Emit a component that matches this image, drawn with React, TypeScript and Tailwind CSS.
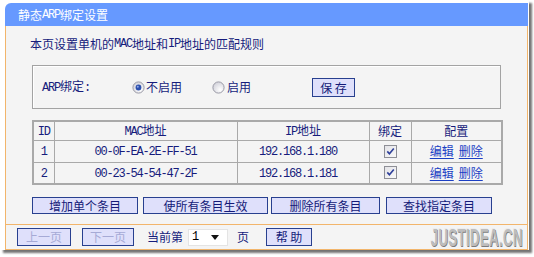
import type { ReactNode } from "react";

const M = ({ children }: { children: ReactNode }) => (
  <span className="font-['Liberation_Mono',monospace] tracking-[-1.2px]">{children}</span>
);

const Radio = ({ on }: { on?: boolean }) => (
  <svg width="13" height="13" viewBox="0 0 13 13" className="shrink-0">
    <defs>
      <radialGradient id={on ? "rg1" : "rg2"} cx="0.65" cy="0.7" r="0.7">
        <stop offset="0" stopColor="#ffffff" />
        <stop offset="1" stopColor="#d4d4dc" />
      </radialGradient>
    </defs>
    <circle cx="6.5" cy="6.5" r="5.6" fill={`url(#${on ? "rg1" : "rg2"})`} stroke="#9a9aa6" strokeWidth="1" />
    {on && <circle cx="6.5" cy="6.5" r="2.9" fill="#2b4fae" />}
    {on && <circle cx="5.8" cy="5.7" r="1" fill="#8fa6e6" />}
  </svg>
);

const Check = () => (
  <svg width="13" height="13" viewBox="0 0 13 13" className="mx-auto block">
    <defs>
      <linearGradient id="cg" x1="0" y1="0" x2="1" y2="1">
        <stop offset="0" stopColor="#e2e2e6" />
        <stop offset="1" stopColor="#fafafa" />
      </linearGradient>
    </defs>
    <rect x="0.5" y="0.5" width="12" height="12" fill="url(#cg)" stroke="#8e8f96" />
    <path d="M3.3 6.4 L5.4 8.8 L9.8 3.4" fill="none" stroke="#2e3f9a" strokeWidth="1.6" />
  </svg>
);

const Btn = ({ children, w, dim }: { children: ReactNode; w: string; dim?: boolean }) => (
  <div
    className={`${w} h-full flex items-center justify-center border border-[#28408f] bg-[#dfe0fb] ${
      dim ? "text-[#a6aad6]" : "text-[#141a78]"
    }`}
  >
    {children}
  </div>
);

const rows = [
  { id: "1", mac: "00-0F-EA-2E-FF-51", ip: "192.168.1.180" },
  { id: "2", mac: "00-23-54-54-47-2F", ip: "192.168.1.181" },
];

export default function App() {
  return (
    <div className="w-[534px] h-[257px] bg-white font-['Noto_Sans_CJK_SC',sans-serif] text-[12px] leading-none text-[#161c7c]">
      <div className="w-[529px] h-[250px] bg-white pl-[5px] pt-[3px] shadow-[3px_3px_2px_rgba(0,0,0,0.55)]">
        <div className="w-[523px] flex flex-col">
          {/* header */}
          <div className="h-[23px] rounded-tl-[6px] bg-[#6699ff] text-white flex items-center pl-[13px]">
            静态<M>ARP</M>绑定设置
          </div>

          {/* body */}
          <div className="h-[224px] bg-[#f4f4f4] border-x border-b border-[#f2b56b] flex flex-col">
            <div className="mt-[10px] h-[16px] flex items-center pl-[24px]">
              本页设置单机的<M>MAC</M>地址和<M>IP</M>地址的匹配规则
            </div>

            {/* fieldset */}
            <div className="mt-[13px] ml-[26px] w-[469px] h-[44px] border border-[#a3a3a3] shadow-[inset_1px_1px_0_#ffffff] flex items-center pl-[9px]">
              <span className="w-[90px]">
                <M>ARP</M>绑定<M>:</M>
              </span>
              <Radio on />
              <span className="ml-[1px]">不启用</span>
              <span className="ml-[30px]">
                <Radio />
              </span>
              <span className="ml-[2px]">启用</span>
              <div className="ml-[61px] h-[19px] mt-[1px]">
                <Btn w="w-[43px]">保&nbsp;存</Btn>
              </div>
            </div>

            {/* table */}
            <table className="mt-[11px] ml-[26px] w-[469px] table-fixed border-collapse border-2 border-[#a9a9a9]">
              <colgroup>
                <col className="w-[21px]" />
                <col className="w-[183px]" />
                <col className="w-[132px]" />
                <col className="w-[42px]" />
                <col className="w-[91px]" />
              </colgroup>
              <thead>
                <tr className="h-[19px]">
                  <th className="border border-[#a9a9a9] font-normal"><M>ID</M></th>
                  <th className="border border-[#a9a9a9] font-normal"><M>MAC</M>地址</th>
                  <th className="border border-[#a9a9a9] font-normal"><M>IP</M>地址</th>
                  <th className="border border-[#a9a9a9] font-normal">绑定</th>
                  <th className="border border-[#a9a9a9] font-normal">配置</th>
                </tr>
              </thead>
              <tbody>
                {rows.map((r) => (
                  <tr key={r.id} className="h-[22px]">
                    <td className="border border-[#a9a9a9] text-center"><M>{r.id}</M></td>
                    <td className="border border-[#a9a9a9] text-center"><M>{r.mac}</M></td>
                    <td className="border border-[#a9a9a9] text-center pr-[10px]"><M>{r.ip}</M></td>
                    <td className="border border-[#a9a9a9]"><Check /></td>
                    <td className="border border-[#a9a9a9] text-center">
                      <span className="text-[#1b3fc4] underline underline-offset-2">编辑</span>
                      <span className="ml-[5px] text-[#1b3fc4] underline underline-offset-2">删除</span>
                    </td>
                  </tr>
                ))}
              </tbody>
            </table>

            {/* action buttons */}
            <div className="mt-[12px] h-[17px] ml-[26px] flex">
              <Btn w="w-[106px]">增加单个条目</Btn>
              <div className="ml-[5px] h-full"><Btn w="w-[125px]">使所有条目生效</Btn></div>
              <div className="ml-[3px] h-full"><Btn w="w-[109px]">删除所有条目</Btn></div>
              <div className="ml-[6px] h-full"><Btn w="w-[106px]">查找指定条目</Btn></div>
            </div>

            <div className="mt-[10px] h-px bg-[#f2b56b]" />

            {/* pagination */}
            <div className="h-[24px] flex items-center pl-[11px]">
              <div className="h-[18px]"><Btn w="w-[54px]" dim>上一页</Btn></div>
              <div className="ml-[11px] h-[18px]"><Btn w="w-[52px]" dim>下一页</Btn></div>
              <span className="ml-[13px]">当前第</span>
              <div className="ml-[5px] w-[40px] h-[17px] bg-white border border-[#e4e4e4] flex items-center pl-[3px] text-black">
                <M>1</M>
                <svg width="8" height="5" viewBox="0 0 8 5" className="ml-auto mr-[8px]">
                  <path d="M0 0 H8 L4 5 Z" fill="#111" />
                </svg>
              </div>
              <span className="ml-[9px]">页</span>
              <div className="ml-[17px] h-[18px]"><Btn w="w-[46px]">帮&nbsp;助</Btn></div>
              <span className="ml-auto mr-[4px] mt-[2px] origin-right scale-x-[0.58] font-['Liberation_Sans',sans-serif] font-bold text-[23px] leading-none tracking-[0.5px] text-[#bdbdbd] [text-shadow:1px_1px_0_#7c7c7c,-1px_-1px_0_#ececec]">
                JUSTIDEA.CN
              </span>
            </div>
          </div>
        </div>
      </div>
    </div>
  );
}
